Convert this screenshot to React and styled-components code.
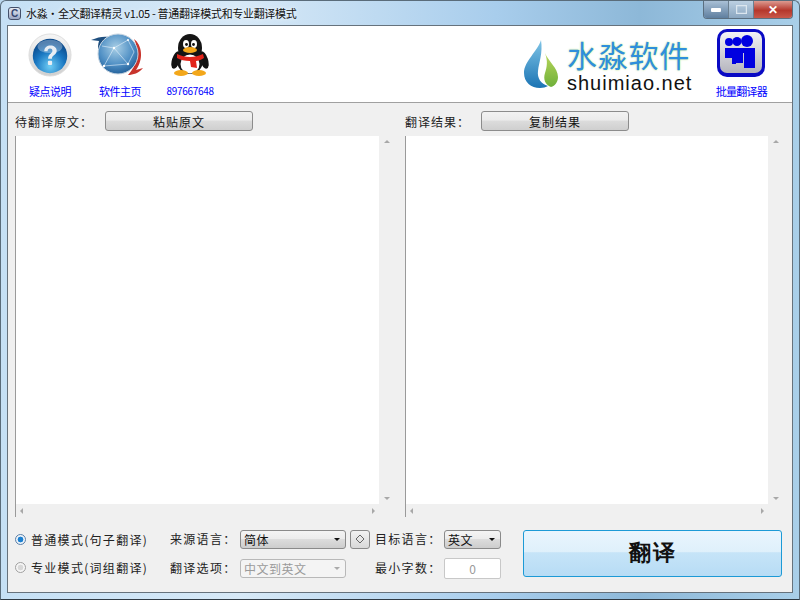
import React from "react";
import styled, { createGlobalStyle } from "styled-components";

const GlobalStyle = createGlobalStyle`
  html, body { margin: 0; padding: 0; background: #b9d7ee; }
  body { font-family: "Noto Sans CJK SC", "Liberation Sans", sans-serif; font-size: 12px; color: #222; }
`;

const Frame = styled.div`
  width: 800px;
  height: 600px;
  box-sizing: border-box;
  display: flex;
  flex-direction: column;
  overflow: hidden;
  padding: 0 6px 6px;
  border: 1px solid #5a6c7a;
  border-bottom-color: #2f3a44;
  border-radius: 6px 6px 0 0;
  background: linear-gradient(90deg, #c5e0f5 0%, #d7e9f7 30%, #a8cdec 62%, #8db8d8 80%, #a9cfe9 100%);
`;

const TitleBar = styled.div`
  height: 24px;
  flex: none;
  display: flex;
  align-items: center;
  gap: 5px;
  padding-left: 1px;
  color: #111;
`;

const AppIcon = styled.div`
  width: 13px;
  height: 13px;
  box-sizing: border-box;
  border: 1px solid #44506a;
  border-radius: 3px;
  background: linear-gradient(#e6eaf2, #9aa7c4);
  color: #33456f;
  font: bold 10px/11px "Liberation Sans", sans-serif;
  text-align: center;
`;

const TitleText = styled.span`
  font-size: 11px;
  letter-spacing: -0.32px;
  white-space: nowrap;
  text-shadow: 0 0 4px #fff;
`;

const Spacer = styled.div`
  flex: 1;
`;

const Controls = styled.div`
  display: flex;
  align-self: flex-start;
  height: 17px;
  border: 1px solid #5b6f80;
  border-top: none;
  border-radius: 0 0 4px 4px;
  overflow: hidden;
`;

const ControlBtn = styled.div`
  width: ${(p) => p.$w}px;
  display: flex;
  align-items: center;
  justify-content: center;
  background: ${(p) => p.$bg};
  border-left: ${(p) => (p.$first ? "none" : "1px solid #6b7f90")};
  color: #fff;
  font: bold 12px "Liberation Sans", sans-serif;
`;

const Client = styled.div`
  flex: 1;
  display: flex;
  flex-direction: column;
  background: #f0f0f0;
  border: 1px solid #66727c;
  min-height: 0;
`;

const Header = styled.div`
  height: 76px;
  flex: none;
  background: #fff;
  border-bottom: 1px solid #a0a0a0;
  display: flex;
  padding-left: 2px;
`;

const NavItem = styled.div`
  width: ${(p) => p.$w}px;
  margin-left: ${(p) => p.$ml || 0}px;
  display: flex;
  flex-direction: column;
  align-items: center;
  padding-top: 5px;
`;

const IconSlot = styled.div`
  height: 48px;
  display: flex;
  align-items: center;
  justify-content: center;
  margin-top: ${(p) => p.$lift || 0}px;
  margin-bottom: ${(p) => -(p.$lift || 0)}px;
`;

const NavLabel = styled.div`
  margin-top: 5px;
  color: #0000ff;
  font-size: ${(p) => p.$size || 11}px;
  letter-spacing: ${(p) => p.$track ?? -0.5}px;
  line-height: 14px;
  white-space: nowrap;
`;

const Logo = styled.div`
  display: flex;
  align-items: center;
  gap: 8px;
  margin-left: 293px;
`;

const LogoText = styled.div`
  display: flex;
  flex-direction: column;
`;

const LogoCn = styled.div`
  color: #2f8fdc;
  font-size: 30px;
  line-height: 38px;
  letter-spacing: 0.75px;
  text-shadow: 0 0 2px #b5e07a;
`;

const LogoEn = styled.div`
  color: #111;
  font: 20px/20px "Liberation Sans", sans-serif;
  letter-spacing: 1px;
`;

const Panels = styled.div`
  flex: 1;
  min-height: 0;
  display: grid;
  grid-template-columns: 379px 378px;
  column-gap: 11px;
  padding: 8px 0 0 7px;
`;

const Panel = styled.div`
  display: flex;
  flex-direction: column;
  min-height: 0;
`;

const PanelHead = styled.div`
  height: 20px;
  flex: none;
  margin-bottom: 5px;
  display: flex;
  align-items: center;
`;

const HeadLabel = styled.label`
  width: ${(p) => p.$w}px;
  flex: none;
  letter-spacing: 1px;
  white-space: nowrap;
`;

const PushButton = styled.button`
  width: 148px;
  height: 20px;
  padding: 0;
  border: 1px solid #8c8c8c;
  border-radius: 3px;
  background: linear-gradient(#f2f2f2 0%, #ebebeb 45%, #dcdcdc 50%, #cfcfcf 100%);
  font: inherit;
  color: #111;
  letter-spacing: 1px;
`;

const TextBox = styled.div`
  flex: 1;
  min-height: 0;
  display: grid;
  grid-template-columns: 1fr 15px;
  grid-template-rows: 1fr 13px;
  border-left: 1px solid #9a9a9a;
  background: #f0f0f0;
`;

const TextArea = styled.div`
  background: #fff;
`;

const VScroll = styled.div`
  display: flex;
  flex-direction: column;
  justify-content: space-between;
  align-items: center;
  padding: 4px 0;
  background: #f0f0f0;
`;

const HScroll = styled.div`
  display: flex;
  justify-content: space-between;
  align-items: center;
  padding: 0 4px;
  background: #f0f0f0;
`;

const Corner = styled.div`
  background: #f0f0f0;
`;

const Arrow = styled.i`
  width: 0;
  height: 0;
  display: block;
  border: 3px solid transparent;
  ${(p) => p.$dir === "up" && "border-bottom-color: #a8a8a8; border-top-width: 0;"}
  ${(p) => p.$dir === "down" && "border-top-color: #a8a8a8; border-bottom-width: 0;"}
  ${(p) => p.$dir === "left" && "border-right-color: #a8a8a8; border-left-width: 0;"}
  ${(p) => p.$dir === "right" && "border-left-color: #a8a8a8; border-right-width: 0;"}
`;

const Footer = styled.div`
  height: 75px;
  flex: none;
  display: flex;
  padding: 13px 0 0 7px;
  box-sizing: border-box;
`;

const RadioCol = styled.div`
  width: 155px;
  flex: none;
  display: grid;
  grid-auto-rows: 18px;
  row-gap: 10px;
  align-items: center;
  align-content: start;
`;

const RadioRow = styled.div`
  display: flex;
  align-items: center;
  gap: 5px;
  letter-spacing: 1.3px;
  white-space: nowrap;
`;

const RadioDot = styled.span`
  width: 11px;
  height: 11px;
  box-sizing: border-box;
  border-radius: 50%;
  border: 1px solid ${(p) => (p.$on ? "#5a7fa8" : "#a0a0a0")};
  background: ${(p) => (p.$on ? "radial-gradient(circle, #1b7fd0 0 2.6px, #eef4fa 3.2px)" : "radial-gradient(circle, #d8d8d8 0 2.6px, #f6f6f6 3.2px)")};
`;

const Fields = styled.div`
  width: 345px;
  flex: none;
  display: grid;
  grid-template-columns: 70px 106px 4px 20px 5px 69px 57px;
  grid-auto-rows: 18px;
  row-gap: 11px;
  align-items: center;
  align-content: start;
`;

const FieldLabel = styled.span`
  grid-column: ${(p) => p.$col};
  letter-spacing: 1.3px;
  white-space: nowrap;
  padding-bottom: 2px;
`;

const Select = styled.div`
  grid-column: ${(p) => p.$col};
  height: 19px;
  box-sizing: border-box;
  display: flex;
  align-items: center;
  justify-content: space-between;
  padding: 0 5px 0 3px;
  border: 1px solid ${(p) => (p.$disabled ? "#b8b8b8" : "#8a8a8a")};
  border-radius: 3px;
  background: ${(p) => (p.$disabled ? "#f4f4f4" : "linear-gradient(#f4f4f4 0%, #ececec 45%, #dcdcdc 50%, #cdcdcd 100%)")};
  color: ${(p) => (p.$disabled ? "#9a9a9a" : "#111")};
  letter-spacing: 0.5px;
`;

const Caret = styled.i`
  width: 0;
  height: 0;
  border: 3.5px solid transparent;
  border-bottom-width: 0;
  border-top-color: ${(p) => (p.$disabled ? "#aaa" : "#111")};
`;

const SwapBtn = styled.div`
  grid-column: 4;
  height: 19px;
  box-sizing: border-box;
  border: 1px solid #8a8a8a;
  border-radius: 3px;
  background: linear-gradient(#f2f2f2, #d8d8d8);
  display: flex;
  align-items: center;
  justify-content: center;
`;

const NumInput = styled.div`
  grid-column: 7;
  height: 21px;
  box-sizing: border-box;
  border: 1px solid #c8c8c8;
  border-radius: 2px;
  background: #fff;
  color: #9a9a9a;
  text-align: center;
  line-height: 19px;
`;

const TranslateBtn = styled.button`
  width: 259px;
  height: 47px;
  margin: 0 0 0 8px;
  padding: 0 0 2px;
  border: 1px solid #1c9ad6;
  border-radius: 3px;
  background: linear-gradient(#e9f5fd 0%, #dff0fb 47%, #c6e4f8 48%, #b7dcf5 100%);
  font-size: 22px;
  font-weight: 700;
  letter-spacing: 1.5px;
  color: #111;
`;

const HelpIcon = () => (
  <svg width="44" height="44" viewBox="0 0 46 46">
    <defs>
      <radialGradient id="helpball" cx="50%" cy="80%" r="70%">
        <stop offset="0" stopColor="#6fcdf5" />
        <stop offset="0.6" stopColor="#1a78c2" />
        <stop offset="1" stopColor="#0c4c8e" />
      </radialGradient>
      <linearGradient id="helprim" x1="0" y1="0" x2="0" y2="1">
        <stop offset="0" stopColor="#f6f6f6" />
        <stop offset="1" stopColor="#cfcfcf" />
      </linearGradient>
    </defs>
    <circle cx="23" cy="23" r="22" fill="url(#helprim)" stroke="#dcdcdc" />
    <circle cx="23" cy="24" r="18" fill="url(#helpball)" />
    <ellipse cx="23" cy="14" rx="13" ry="7" fill="#fff" opacity="0.3" />
    <path d="M17 19c0-4 3-6 6.500-6s6.500 2 6.500 5.500c0 4.500-5 4.500-5 8.500h-4c0-5.500 4.500-5.500 4.500-8.500 0-1.500-1-2.300-2.500-2.300s-2.500 1-2.500 2.800z" fill="#e8eef4" />
    <rect x="20.800" y="29" width="4.400" height="4.400" rx="1" fill="#e8eef4" />
  </svg>
);

const GlobeIcon = () => (
  <svg width="60" height="46" viewBox="0 0 60 46">
    <defs>
      <radialGradient id="globeball" cx="45%" cy="35%" r="70%">
        <stop offset="0" stopColor="#a9cfe6" />
        <stop offset="0.6" stopColor="#4f8fc4" />
        <stop offset="1" stopColor="#1d5a94" />
      </radialGradient>
    </defs>
    <path d="M1 8C8 5 14 4 19 5 13 11 11 20 13 30 8 24 7 15 9 9z" fill="#1f4f7f" />
    <path d="M44 7c8 6 10 20 2 31l7-2c-4 5-10 7-15 7 9-9 12-24 6-36z" fill="#c8342c" />
    <circle cx="28" cy="22" r="20" fill="url(#globeball)" stroke="#c9d6e2" />
    <path d="M14 34L24 16 38 8M24 16l14 16M24 16L12 14M38 32l6-12-6-12M14 34l24-2" stroke="#e6f2fb" strokeWidth="0.6" fill="none" />
    <circle cx="24" cy="16" r="1.200" fill="#fff" />
    <circle cx="38" cy="32" r="1.200" fill="#fff" />
    <circle cx="14" cy="34" r="1.200" fill="#fff" />
    <circle cx="38" cy="8" r="1" fill="#fff" />
  </svg>
);

const PenguinIcon = () => (
  <svg width="40" height="44" viewBox="0 0 40 44">
    <ellipse cx="6" cy="27" rx="4" ry="9" fill="#111" transform="rotate(18 6 27)" />
    <ellipse cx="34" cy="27" rx="4" ry="9" fill="#111" transform="rotate(-18 34 27)" />
    <ellipse cx="20" cy="15" rx="12" ry="14" fill="#151515" />
    <ellipse cx="20" cy="28" rx="13" ry="13" fill="#151515" />
    <ellipse cx="20" cy="31" rx="9.500" ry="9.500" fill="#fff" />
    <ellipse cx="16" cy="11" rx="3" ry="4" fill="#fff" />
    <ellipse cx="24" cy="11" rx="3" ry="4" fill="#fff" />
    <circle cx="16.500" cy="11.500" r="1.400" fill="#111" />
    <circle cx="23.500" cy="11.500" r="1.400" fill="#111" />
    <ellipse cx="20" cy="17" rx="7" ry="3" fill="#f3a71a" />
    <path d="M7 21c8 4 18 4 26 0l1 4c-3 2-6 3-8 3l1 7-6-1-1-6c-5 0-10-1-13-3z" fill="#e2231a" />
    <ellipse cx="11" cy="40" rx="7" ry="3" fill="#f3a71a" />
    <ellipse cx="29" cy="40" rx="7" ry="3" fill="#f3a71a" />
  </svg>
);

const DropLogo = () => (
  <svg width="36" height="50" viewBox="0 0 36 50">
    <defs>
      <linearGradient id="dropblue" x1="0" y1="0" x2="0" y2="1">
        <stop offset="0" stopColor="#7fc4e6" />
        <stop offset="1" stopColor="#1b74b4" />
      </linearGradient>
      <linearGradient id="dropgreen" x1="0" y1="0" x2="0" y2="1">
        <stop offset="0" stopColor="#b9d65a" />
        <stop offset="1" stopColor="#6fb03a" />
      </linearGradient>
    </defs>
    <path d="M18 1C15 12 1 22 1 34c0 9 7 15 16 15 3 0 6-1 8-2-7-2-11-8-10-15 1-9 5-18 3-31z" fill="url(#dropblue)" />
    <path d="M22 14c3 8 13 15 13 24 0 5-3 9-7 10-6-2-8-8-6-14 2-6 3-12 0-20z" fill="url(#dropgreen)" />
  </svg>
);

const GroupIcon = () => (
  <svg width="50" height="50" viewBox="0 0 50 50">
    <defs>
      <linearGradient id="groupbg" x1="0" y1="0" x2="0" y2="1">
        <stop offset="0" stopColor="#f2f2f6" />
        <stop offset="1" stopColor="#b5b5bd" />
      </linearGradient>
    </defs>
    <rect x="1" y="1" width="48" height="48" rx="10" fill="#0a0ac4" />
    <rect x="4" y="4" width="42" height="41" rx="7" fill="url(#groupbg)" />
    <g fill="#0000e0">
      <circle cx="13" cy="14" r="4" />
      <circle cx="21" cy="13.500" r="4.500" />
      <circle cx="31" cy="13" r="6" />
      <path d="M9 20h7v8h4v8h-4v-6H9z" />
      <path d="M16 20h7v5h4v10h-7v-7h-4z" />
      <path d="M23 20h16v20H28V25h-5z" />
    </g>
  </svg>
);

export default function App() {
  return (
    <Frame>
      <GlobalStyle />
      <TitleBar>
        <AppIcon>C</AppIcon>
        <TitleText>水淼·全文翻译精灵 v1.05 - 普通翻译模式和专业翻译模式</TitleText>
        <Spacer />
        <Controls>
          <ControlBtn $w={24} $first $bg="linear-gradient(#a9c0d6, #5f7f9f)">
            <svg width="10" height="4"><rect width="10" height="4" rx="1" fill="#fff" /></svg>
          </ControlBtn>
          <ControlBtn $w={24} $bg="linear-gradient(#bcd0e2, #8aa6c0)">
            <svg width="11" height="9"><rect x="0.500" y="0.500" width="10" height="8" fill="none" stroke="#dbe6ef" strokeWidth="1.500" /></svg>
          </ControlBtn>
          <ControlBtn $w={38} $bg="linear-gradient(#dd9a90, #b5372c 55%, #c9584a)">✕</ControlBtn>
        </Controls>
      </TitleBar>
      <Client>
        <Header>
          <NavItem $w={80}>
            <IconSlot><HelpIcon /></IconSlot>
            <NavLabel>疑点说明</NavLabel>
          </NavItem>
          <NavItem $w={60}>
            <IconSlot><GlobeIcon /></IconSlot>
            <NavLabel>软件主页</NavLabel>
          </NavItem>
          <NavItem $w={80}>
            <IconSlot><PenguinIcon /></IconSlot>
            <NavLabel $size={10} $track={-0.3}>897667648</NavLabel>
          </NavItem>
          <Logo>
            <DropLogo />
            <LogoText>
              <LogoCn>水淼软件</LogoCn>
              <LogoEn>shuimiao.net</LogoEn>
            </LogoText>
          </Logo>
          <NavItem $w={70} $ml={14}>
            <IconSlot $lift={-2}><GroupIcon /></IconSlot>
            <NavLabel $track={-0.7}>批量翻译器</NavLabel>
          </NavItem>
        </Header>
        <Panels>
          <Panel>
            <PanelHead>
              <HeadLabel $w={90}>待翻译原文：</HeadLabel>
              <PushButton>粘贴原文</PushButton>
            </PanelHead>
            <TextBox>
              <TextArea />
              <VScroll><Arrow $dir="up" /><Arrow $dir="down" /></VScroll>
              <HScroll><Arrow $dir="left" /><Arrow $dir="right" /></HScroll>
              <Corner />
            </TextBox>
          </Panel>
          <Panel>
            <PanelHead>
              <HeadLabel $w={76}>翻译结果：</HeadLabel>
              <PushButton>复制结果</PushButton>
            </PanelHead>
            <TextBox>
              <TextArea />
              <VScroll><Arrow $dir="up" /><Arrow $dir="down" /></VScroll>
              <HScroll><Arrow $dir="left" /><Arrow $dir="right" /></HScroll>
              <Corner />
            </TextBox>
          </Panel>
        </Panels>
        <Footer>
          <RadioCol>
            <RadioRow><RadioDot $on />普通模式(句子翻译)</RadioRow>
            <RadioRow><RadioDot />专业模式(词组翻译)</RadioRow>
          </RadioCol>
          <Fields>
            <FieldLabel $col={1}>来源语言：</FieldLabel>
            <Select $col={2}>简体<Caret /></Select>
            <SwapBtn>
              <svg width="10" height="10"><path d="M5 1l4 4-4 4-4-4z" fill="none" stroke="#666" /></svg>
            </SwapBtn>
            <FieldLabel $col={6}>目标语言：</FieldLabel>
            <Select $col={7}>英文<Caret /></Select>
            <FieldLabel $col={1}>翻译选项：</FieldLabel>
            <Select $col={2} $disabled>中文到英文<Caret $disabled /></Select>
            <FieldLabel $col={6}>最小字数：</FieldLabel>
            <NumInput>0</NumInput>
          </Fields>
          <TranslateBtn>翻译</TranslateBtn>
        </Footer>
      </Client>
    </Frame>
  );
}
